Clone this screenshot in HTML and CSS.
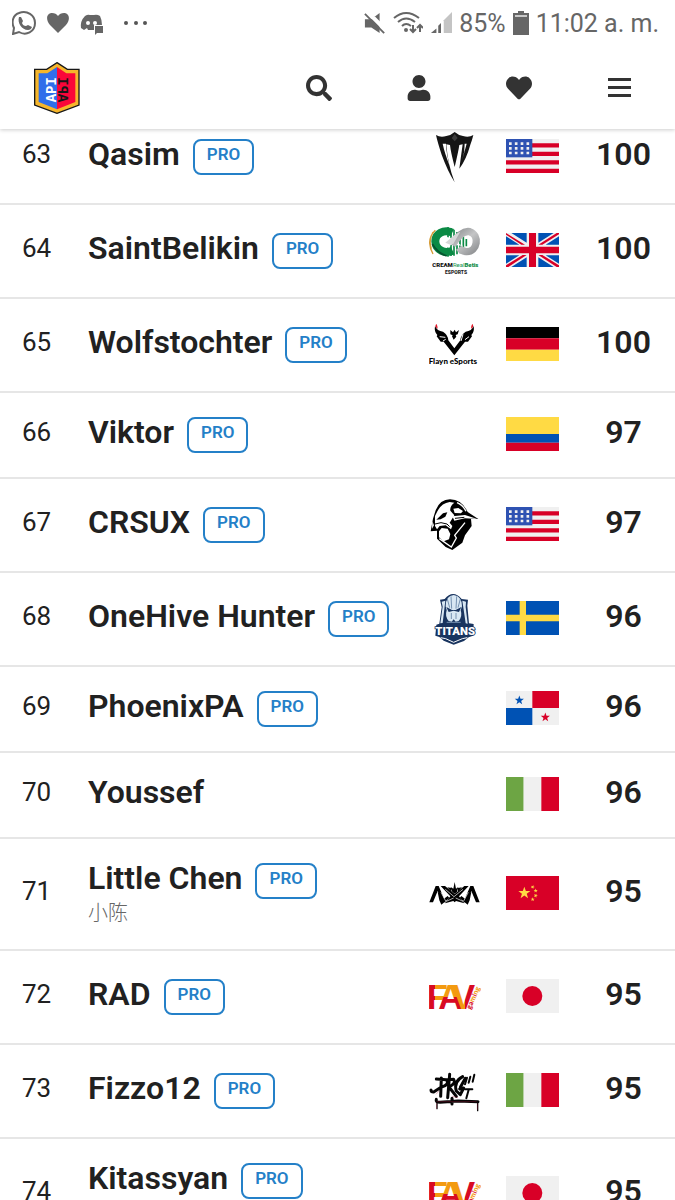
FILE: index.html
```html
<!DOCTYPE html>
<html lang="en">
<head>
    <meta charset="UTF-8">
    <meta name="viewport" content="width=device-width, initial-scale=1.0">
    <title>Player ranking</title>
    <link rel="stylesheet" href="styles.css">
</head>
<body>
    <!-- Shared flags and team logos -->
    <svg class="sprite" width="0" height="0" aria-hidden="true">
        <defs>
            <linearGradient id="favF" x1="0" x2="1" y1="0" y2="0">
                <stop offset=".4" stop-color="#d80b22"/><stop offset=".4" stop-color="#f39a10"/>
            </linearGradient>
            <linearGradient id="favA" x1="0" x2="0" y1="0" y2="1">
                <stop offset=".5" stop-color="#f39a10"/><stop offset=".5" stop-color="#d80b22"/>
            </linearGradient>
            <linearGradient id="favV" x1="0" x2="1" y1="0" y2="0">
                <stop offset=".56" stop-color="#f39a10"/><stop offset=".56" stop-color="#d80b22"/>
            </linearGradient>
            <linearGradient id="steel" x1="0" x2="1" y1="0" y2="1">
                <stop offset="0" stop-color="#8d9092"/><stop offset=".5" stop-color="#c4c5c6"/><stop offset="1" stop-color="#909294"/>
            </linearGradient>
            <path id="star" d="M0-10 2.400-3.200 9.500-3.100 3.800 1.200 5.900 8.100 0 4-5.900 8.100-3.800 1.200-9.500-3.100-2.400-3.200z"/>
        </defs>
        <symbol id="flag-us" viewBox="0 0 159 102" preserveAspectRatio="none">
            <path fill="#f0f0f0" d="M0 0h159v102H0z"/>
            <path fill="#d80027" d="M0 12.700h159v12.700H0zM0 38.200h159V51H0zM0 63.700h159v12.700H0zM0 89.200h159V102H0z"/>
            <path fill="#2e52b2" d="M0 0h79v55H0z"/>
            <path stroke="#f0f0f0" stroke-width="8" stroke-dasharray="8 9.500" d="M9 14h62M9 28h62M9 42h62"/>
        </symbol>
        <symbol id="flag-gb" viewBox="0 0 159 102" preserveAspectRatio="none">
            <path fill="#f0f0f0" d="M0 0h159v102H0z"/>
            <path fill="#0052b4" d="M16 0h46v29zM97 0h46L97 29zM0 10v25h40zM159 10v25h-40zM0 92V67h40zM159 92V67h-40zM16 102h46V73zM97 102h46L97 73z"/>
            <path fill="#d80027" d="M69 0h21v41h69v20H90v41H69V61H0V41h69z"/>
            <path fill="#d80027" d="M0 0v5l46 30h11zM159 0h-7L97 35h12l50-31zM0 102v-5l50-31h12L7 102zM159 102v-5l-50-31H97l55 36z"/>
        </symbol>
        <symbol id="flag-de" viewBox="0 0 159 102" preserveAspectRatio="none">
            <path d="M0 0h159v34H0z"/><path fill="#d80027" d="M0 34h159v34H0z"/><path fill="#ffda44" d="M0 68h159v34H0z"/>
        </symbol>
        <symbol id="flag-co" viewBox="0 0 159 102" preserveAspectRatio="none">
            <path fill="#ffda44" d="M0 0h159v51H0z"/><path fill="#0052b4" d="M0 51h159v26H0z"/><path fill="#d80027" d="M0 77h159v25H0z"/>
        </symbol>
        <symbol id="flag-se" viewBox="0 0 159 102" preserveAspectRatio="none">
            <path fill="#0052b4" d="M0 0h159v102H0z"/><path fill="#ffda44" d="M41 0h19v41h99v20H60v41H41V61H0V41h41z"/>
        </symbol>
        <symbol id="flag-pa" viewBox="0 0 159 102" preserveAspectRatio="none">
            <path fill="#f0f0f0" d="M0 0h159v102H0z"/><path fill="#d80027" d="M79 0h80v51H79z"/><path fill="#0052b4" d="M0 51h79v51H0z"/>
            <use href="#star" transform="translate(40 28) scale(1.450)" fill="#0052b4"/>
            <use href="#star" transform="translate(118 79) scale(1.450)" fill="#d80027"/>
        </symbol>
        <symbol id="flag-it" viewBox="0 0 159 102" preserveAspectRatio="none">
            <path fill="#6da544" d="M0 0h53v102H0z"/><path fill="#f0f0f0" d="M53 0h53v102H53z"/><path fill="#d80027" d="M106 0h53v102h-53z"/>
        </symbol>
        <symbol id="flag-cn" viewBox="0 0 159 102" preserveAspectRatio="none">
            <path fill="#d80027" d="M0 0h159v102H0z"/>
            <g fill="#ffda44">
                <use href="#star" transform="translate(55 51) scale(1.900)"/>
                <use href="#star" transform="translate(80 33) rotate(20) scale(.650)"/>
                <use href="#star" transform="translate(89 44) scale(.650)"/>
                <use href="#star" transform="translate(89 59) rotate(20) scale(.650)"/>
                <use href="#star" transform="translate(80 70) scale(.650)"/>
            </g>
        </symbol>
        <symbol id="flag-jp" viewBox="0 0 159 102" preserveAspectRatio="none">
            <path fill="#f0f0f0" d="M0 0h159v102H0z"/><circle cx="79" cy="51" r="30" fill="#d80027"/>
        </symbol>

        <symbol id="team-fang" viewBox="42 17 156 156">
            <path fill="#141414" d="M63 29q13 8 31 3 15-3 25-12 10 9 25 12 18 5 31-3-4 17-9 29-12 44-33 72 5-38 10-73l-10 2q-3 20-14 66-12-46-14-66l-11-2q4 60 25 114-22-36-39-83-12-36-17-59z"/>
            <path fill="#fff" d="M83 55q6 29 21 66-10-36-11-66zM155 55q-6 23-14 50 9-24 8-50z"/>
            <path fill="#3a3a3a" d="m119 26 9 12-9 10-9-10z"/>
        </symbol>
        <symbol id="team-cream" viewBox="42 299 156 156">
            <path fill="none" stroke="#d69b35" stroke-width="4" d="M61 315q-30 30-7 71M54 320q-14 25-5 50"/>
            <path fill="none" stroke="#0b8a45" stroke-width="24" d="M112 322c-26-12-52 4-51 27 1 25 29 38 52 27"/>
            <path fill="none" stroke="#07532f" stroke-width="5" d="M52 356q15 27 43 36"/>
            <path stroke="#0b8a45" stroke-width="5" d="M99 305v89M108 308v84M117 313v78M126 320v67M135 330v54M145 335v40M154 341v22"/>
            <path fill="#fff" d="M79 346q9-19 35-5 13 16 31 20l-19-1q-17-9-25 7-19-3-22-21z"/>
            <path fill="none" stroke="url(#steel)" stroke-width="22" d="M112 359q27-45 52-40c31 10 24 61-10 60q-14-1-22-12" />
            <path fill="#d6d7d8" d="m91 352 28-24 17-9-20 35-8 5z"/>
            <text x="52" y="425" font-family="Roboto, sans-serif" font-weight="900" font-size="18" fill="#111">CREAM<tspan font-weight="400" fill="#159650">Real</tspan><tspan fill="#0b8a45">Betis</tspan></text>
            <text x="90" y="446" font-family="Roboto, sans-serif" font-weight="900" font-size="15" fill="#222">ESPORTS</text>
        </symbol>
        <symbol id="team-flayn" viewBox="42 56 156 156">
            <path d="M60 77q6 15 24 17 15 9 16 26l18 24 18-24q1-17 16-26 18-2 24-17 3 18-7 27l2 4-12 16h-9l-32 41-32-41h-9l-12-16 2-4q-10-9-7-27z"/>
            <path fill="none" stroke="#fff" stroke-width="3" d="m74 109 17 2M84 122l8-5M162 109l-12 9M144 102l-6 20"/>
            <path d="m106 89 8 7 5-8 4 8 9-7-4 13-6 2 2 5-8 9-5-10 2-3-7-3z"/>
            <path fill="#e21b2d" d="M64 70q5 8 4 15-11-5-4-15zm108 0q-5 8-4 15 11-5 4-15z"/>
            <text x="41" y="191" font-family="Lato, sans-serif" font-weight="900" font-size="24">Flayn eSports</text>
        </symbol>
        <symbol id="team-titan-head" viewBox="42 41 156 156">
            <path d="M62 75q13-33 43-33 35 0 53 38l32 21h-22l2 21-20 28-8 22-30 22-20-9-26-25v-24l-19 2 7-38z"/>
            <path fill="#fff" d="M66 80q12-26 38-30l14 2q-14 10-12 24l12 14-14 22 8 10-4 10-16-12-18 2-8 10-6-10V92z"/>
            <path d="m64 103 20-19 13-3-6 13-14 8z"/>
            <path fill="#fff" d="m72 138 8-10 18 2 8 16-4 16-16 6-14-12zM112 93l38-4 37 12-37-2-32 7zM115 70l15-2 14 9-6 7-19-1zM52 108l5 12-6 10z"/>
            <path fill="none" stroke="#fff" stroke-width="4" d="m150 112-31 38 5 8-15 27-36-25M126 52q18 7 27 26"/>
            <path fill="none" stroke="#000" stroke-width="3" d="M60 116l18-4 18 4 8 8M120 99l28-3"/>
        </symbol>
        <symbol id="team-titans" viewBox="42 322 156 156">
            <path fill="#19345f" d="m75 342 14-2q25-30 51 0l19 2-2 18 5 53 14 2-2 35-13 5-14 11-31 11-30-12-13-11-12-4 3-33 9-3 7-49z"/>
            <path fill="#d8e7f3" d="m80 348 11-3-8 67-7 1 7-50zM153 348l-11-3 10 68 6 1-6-50zM92 362q0-32 24-34 24 2 25 34l-4 12q6 18-6 32l-9 2-6-7-6 7-9-2q-12-14-6-32z"/>
            <path fill="#19345f" d="m94 364 17 9h11l17-9-7 15-16-4-15 4z"/>
            <path fill="none" stroke="#7692b1" stroke-width="3" d="m108 332 2 37M125 332l-2 37M97 340l7 26M136 340l-7 26M95 410h42M109 382v18M123 382v18"/>
            <path fill="none" stroke="#fff" stroke-width="3" d="m77 456 15 3 24 11 26-11 15-3"/>
            <text x="61" y="447" font-family="Roboto, sans-serif" font-weight="900" font-size="34" fill="#fff" stroke="#19345f" stroke-width="5" paint-order="stroke">TITANS</text>
        </symbol>
        <symbol id="team-nova" viewBox="42 26 156 156">
            <path d="M43 129 62 80h9l21 49H82L68 95l-14 34zM194 129 175 80h-9l-21 49h10l14-34 14 34z"/>
            <path d="M77 80h13l29 24 29-24h13l-29 31 16 21-25-7-4 4-4-4-25 7 16-21z"/>
            <path d="m68 98 8 3 9 19 13-10 5 6-24 20-6-13zM169 98l-8 3-9 19-13-10-5 6 24 20 6-13z"/>
            <path d="m97 84 12 2v12zM141 84l-12 2v12zM119 68l4 20 7-5-4 15-7 5-7-5-5-15 8 5z"/>
            <path stroke="#fff" stroke-width="2" fill="none" d="m91 90 26 22 27-22M94 126l22-10M144 126l-22-10M78 99l14 26M160 99l-14 26"/>
        </symbol>
        <symbol id="team-fav" viewBox="42 333 156 156">
            <g font-family="'Liberation Sans Narrow', 'Liberation Sans', sans-serif" font-weight="700" font-size="104">
                <text x="35" y="448" fill="url(#favF)">F</text>
                <text x="70" y="448" fill="url(#favA)">A</text>
                <text x="111" y="448" fill="url(#favV)">V</text>
            </g>
            <text transform="translate(167 449) rotate(-66)" font-family="Lato, sans-serif" font-weight="900" font-size="22" fill="#d80b22">ga<tspan fill="#f39a10">m</tspan>i<tspan fill="#f39a10">ng</tspan></text>
        </symbol>
        <symbol id="team-graffiti" viewBox="42 44 156 156">
            <g fill="none" stroke="#050505" stroke-linecap="round" stroke-linejoin="round">
                <path stroke-width="9" d="m79 83-2 55M64 86l30 2q12 14-16 23l-22 14q-8 0-8-6M104 72l-6 70M96 88l20-1q8 12-14 23l22 28M143 79q-28 15-19 43l12 11 10-20-12 3M151 84l-15 27M64 147q-3 9 11 9l54-4 60 2M111 144v17"/>
                <path stroke-width="6" d="m156 82-6 20M166 79l-5 18M178 73l-5 21M150 117h22M161 118l-7 26"/>
                <path stroke-width="4" d="M66 157v18M188 157v24"/>
                <path stroke="#b01840" stroke-width="1" d="M66 154h118M64 131l7-8M112 138l16 4M65 160v14M187 160v17"/>
            </g>
        </symbol>
    </svg>

    <header class="header">
        <div class="status-bar">
            <div class="status-group">
                <svg class="status-icon" viewBox="0 0 24 24" aria-hidden="true"><path fill="none" stroke="#666" stroke-width="2" d="m1 23 1-6C-1 11 1 4 7 2c8-3 16 2 16 10 0 9-9 13-16 9z"/><path fill="#666" d="M7 6h2l2 4-1 2q1 3 4 3l2-1 4 2q-1 3-4 3C10 19 5 12 7 6z"/></svg>
                <svg class="status-icon" viewBox="0 0 24 24" aria-hidden="true"><path fill="#666" d="M12 22 4 14C-1 8 1 2 6 2q4 0 6 3 2-3 6-3c5 0 7 6 2 12z"/></svg>
                <svg class="status-icon" viewBox="0 0 24 24" aria-hidden="true"><path fill="#666" fill-rule="evenodd" d="M5 5q3-2 5-1h4q3-1 6 1 2 4 2 9h-8v5H8l-1-2-3 2-3-2Q0 10 5 5zm3 5a2 2 0 1 0 0 4 2 2 0 0 0 0-4zm7 0a2 2 0 1 0 0 4 2 2 0 0 0 0-4zM15 15h8v7h-6l-2 2z"/></svg>
                <svg class="status-dots" viewBox="0 0 24 24" aria-hidden="true"><g fill="#555"><circle cx="2" cy="12" r="2"/><circle cx="12" cy="12" r="2"/><circle cx="21" cy="12" r="2"/></g></svg>
            </div>
            <div class="status-group status-right">
                <svg class="signal-icon" viewBox="0 0 24 24" aria-hidden="true"><path fill="#666" d="M1 8h7l9-7v22l-9-6H1z"/><path fill="#fff" d="m10 6 8 8v-3l-6-6z"/><path stroke="#fff" stroke-width="3" d="m4 1 20 20"/><path stroke="#666" stroke-width="2" d="m1 2 21 21"/></svg>
                <svg class="wifi-icon" viewBox="0 0 30 24" aria-hidden="true"><g fill="none" stroke="#666" stroke-width="2"><path d="M1 7q12-10 25 0M5 11q8-7 17 0M9 15q4-4 9 0"/><path d="M20 14v7m-3-3 3 3 3-3M27 21v-7m-3 3 3-3 3 3"/></g><circle cx="13" cy="19" r="2" fill="#666"/></svg>
                <svg class="signal-icon" viewBox="0 0 24 24" aria-hidden="true"><path fill="#c4c4c4" d="M15 9 24 0v23h-9z"/><path fill="#666" d="m1 23 6-5v5zM9 15l3-3v11H9z"/></svg>
                <span>85%</span>
                <svg class="battery-icon" viewBox="0 0 16 24" aria-hidden="true"><path fill="#666" d="M5 0h6v2h5v22H0V2h5z"/><path fill="#c9c9c9" d="M2 4h12v2H2z"/></svg>
                <span>11:02 a. m.</span>
            </div>
        </div>
        <nav class="navbar">
            <a class="brand" href="#" aria-label="Home">
                <svg viewBox="26 21 138 156" aria-hidden="true">
                    <path fill="#f6b62b" stroke="#171717" stroke-width="4" d="m95 23 31 20h35v107l-66 25-67-25V43h36z"/>
                    <path fill="#2f6eea" d="M95 36 66 55H40v86l55 22z"/>
                    <path fill="#fa0639" d="m95 36 28 19h27v86l-55 22z"/>
                    <g font-family="'Liberation Mono', monospace" font-weight="700" font-size="42">
                        <text transform="translate(93 142) rotate(-90)" fill="#fff">API</text>
                        <text transform="translate(97 142) scale(-1 1) rotate(-90)" fill="#171717">API</text>
                    </g>
                </svg>
            </a>
            <div class="nav-actions">
                <button type="button" class="nav-button" aria-label="Search">
                    <svg viewBox="0 0 512 512"><path d="M505 442.700L405.300 343c-4.500-4.500-10.600-7-17-7H372c27.600-35.300 44-79.700 44-128C416 93.100 322.900 0 208 0S0 93.100 0 208s93.100 208 208 208c48.300 0 92.700-16.400 128-44v16.300c0 6.400 2.500 12.500 7 17l99.700 99.700c9.400 9.400 24.600 9.400 33.900 0l28.300-28.300c9.400-9.400 9.400-24.600.1-34zM208 336c-70.700 0-128-57.200-128-128 0-70.700 57.200-128 128-128 70.700 0 128 57.200 128 128 0 70.700-57.200 128-128 128z"/></svg>
                </button>
                <button type="button" class="nav-button" aria-label="Profile">
                    <svg viewBox="-32 0 512 512"><path d="M224 256c70.700 0 128-57.300 128-128S294.700 0 224 0 96 57.300 96 128s57.300 128 128 128zm89.600 32h-16.700c-22.200 10.200-46.900 16-72.900 16s-50.600-5.800-72.900-16h-16.700C60.200 288 0 348.200 0 422.400V464c0 26.500 21.500 48 48 48h352c26.500 0 48-21.500 48-48v-41.600c0-74.200-60.200-134.400-134.400-134.400z"/></svg>
                </button>
                <button type="button" class="nav-button" aria-label="Favorites">
                    <svg viewBox="0 0 512 512"><path d="M462.300 62.600C407.500 15.900 326 24.300 275.700 76.200L256 96.500l-19.700-20.300C186.100 24.300 104.500 15.900 49.700 62.600c-62.800 53.600-66.100 149.800-9.900 207.900l193.500 199.800c12.500 12.900 32.800 12.900 45.300 0l193.500-199.800c56.300-58.100 53-154.300-9.800-207.900z"/></svg>
                </button>
                <button type="button" class="nav-button" aria-label="Menu">
                    <svg viewBox="0 0 26 26"><path d="M2 3h23v3H2zM2 11h23v3H2zM2 19h23v3H2z"/></svg>
                </button>
            </div>
        </nav>
    </header>

    <main class="ranking">
        <table class="ranking-table">
            <tbody>
                <tr>
                    <td class="rank">63</td>
                    <td class="player"><div class="player-line">Qasim <span class="badge">PRO</span></div></td>
                    <td class="team"><svg><use href="#team-fang"/></svg></td>
                    <td class="country"><svg><use href="#flag-us"/></svg></td>
                    <td class="points">100</td>
                </tr>
                <tr>
                    <td class="rank">64</td>
                    <td class="player"><div class="player-line">SaintBelikin <span class="badge">PRO</span></div></td>
                    <td class="team"><svg><use href="#team-cream"/></svg></td>
                    <td class="country"><svg><use href="#flag-gb"/></svg></td>
                    <td class="points">100</td>
                </tr>
                <tr>
                    <td class="rank">65</td>
                    <td class="player"><div class="player-line">Wolfstochter <span class="badge">PRO</span></div></td>
                    <td class="team"><svg><use href="#team-flayn"/></svg></td>
                    <td class="country"><svg><use href="#flag-de"/></svg></td>
                    <td class="points">100</td>
                </tr>
                <tr>
                    <td class="rank">66</td>
                    <td class="player"><div class="player-line">Viktor <span class="badge">PRO</span></div></td>
                    <td class="team"></td>
                    <td class="country"><svg><use href="#flag-co"/></svg></td>
                    <td class="points">97</td>
                </tr>
                <tr>
                    <td class="rank">67</td>
                    <td class="player"><div class="player-line">CRSUX <span class="badge">PRO</span></div></td>
                    <td class="team"><svg><use href="#team-titan-head"/></svg></td>
                    <td class="country"><svg><use href="#flag-us"/></svg></td>
                    <td class="points">97</td>
                </tr>
                <tr>
                    <td class="rank">68</td>
                    <td class="player"><div class="player-line">OneHive Hunter <span class="badge">PRO</span></div></td>
                    <td class="team"><svg><use href="#team-titans"/></svg></td>
                    <td class="country"><svg><use href="#flag-se"/></svg></td>
                    <td class="points">96</td>
                </tr>
                <tr>
                    <td class="rank">69</td>
                    <td class="player"><div class="player-line">PhoenixPA <span class="badge">PRO</span></div></td>
                    <td class="team"></td>
                    <td class="country"><svg><use href="#flag-pa"/></svg></td>
                    <td class="points">96</td>
                </tr>
                <tr>
                    <td class="rank">70</td>
                    <td class="player"><div class="player-line">Youssef</div></td>
                    <td class="team"></td>
                    <td class="country"><svg><use href="#flag-it"/></svg></td>
                    <td class="points">96</td>
                </tr>
                <tr>
                    <td class="rank">71</td>
                    <td class="player">
                        <div class="player-line">Little Chen <span class="badge">PRO</span></div>
                        <div class="player-alias" lang="zh">小陈</div>
                    </td>
                    <td class="team"><svg><use href="#team-nova"/></svg></td>
                    <td class="country"><svg><use href="#flag-cn"/></svg></td>
                    <td class="points">95</td>
                </tr>
                <tr>
                    <td class="rank">72</td>
                    <td class="player"><div class="player-line">RAD <span class="badge">PRO</span></div></td>
                    <td class="team"><svg><use href="#team-fav"/></svg></td>
                    <td class="country"><svg><use href="#flag-jp"/></svg></td>
                    <td class="points">95</td>
                </tr>
                <tr>
                    <td class="rank">73</td>
                    <td class="player"><div class="player-line">Fizzo12 <span class="badge">PRO</span></div></td>
                    <td class="team"><svg><use href="#team-graffiti"/></svg></td>
                    <td class="country"><svg><use href="#flag-it"/></svg></td>
                    <td class="points">95</td>
                </tr>
                <tr>
                    <td class="rank">74</td>
                    <td class="player">
                        <div class="player-line">Kitassyan <span class="badge">PRO</span></div>
                        <div class="player-alias"></div>
                    </td>
                    <td class="team"><svg><use href="#team-fav"/></svg></td>
                    <td class="country"><svg><use href="#flag-jp"/></svg></td>
                    <td class="points">95</td>
                </tr>
            </tbody>
        </table>
    </main>
</body>
</html>
```
FILE: styles.css
```css
* {
    box-sizing: border-box;
}
body {
    display: flex;
    flex-direction: column;
    height: 100vh;
    margin: 0;
    overflow: hidden;
    background-color: #fff;
    color: #212121;
    font-family: Roboto, "Noto Sans CJK SC", sans-serif;
}
svg {
    display: block;
}
.sprite {
    position: absolute;
}

/* Header */
.header {
    position: relative;
    z-index: 1;
    flex: none;
    background-color: #fff;
    box-shadow: 0 1px 4px rgba(0, 0, 0, 0.2);
}
.status-bar {
    display: flex;
    justify-content: space-between;
    align-items: center;
    height: 46px;
    padding: 0 16px 0 12px;
    color: #666;
    font-size: 25px;
}
.status-group {
    display: flex;
    align-items: center;
    gap: 10px;
}
.status-right {
    gap: 7px;
}
.status-icon {
    width: 24px;
    height: 24px;
}
.status-dots {
    width: 24px;
    height: 24px;
    margin-left: 10px;
}
.signal-icon {
    width: 22px;
    height: 24px;
}
.wifi-icon {
    width: 30px;
    height: 24px;
}
.battery-icon {
    width: 16px;
    height: 24px;
}
.navbar {
    display: flex;
    justify-content: space-between;
    align-items: center;
    height: 83px;
    padding: 0 6px 0 34px;
}
.brand svg {
    width: 46px;
    height: 52px;
}
.nav-actions {
    display: flex;
}
.nav-button {
    display: flex;
    justify-content: center;
    width: 100px;
    padding: 16px 0;
    border: none;
    background: none;
    cursor: pointer;
}
.nav-button svg {
    width: 26px;
    height: 26px;
    fill: #333;
}

/* Ranking, scrolled partly under the header */
.ranking {
    flex: 1;
    min-height: 0;
    margin-top: -18px;
    overflow: hidden;
}
.ranking-table {
    width: 100%;
    border-collapse: separate;
    border-spacing: 0;
}
.ranking-table td {
    padding: 18px 0 24px;
    border-bottom: 2px solid #e6e6e6;
    line-height: 42px;
    vertical-align: middle;
}
.ranking-table .rank {
    width: 73px;
    font-size: 26px;
    text-align: center;
}
.ranking-table .player {
    padding-left: 15px;
}
.player-line {
    display: flex;
    align-items: center;
    gap: 13px;
    font-size: 32px;
    font-weight: 600;
    white-space: nowrap;
}
.badge {
    height: 36px;
    margin-top: 6px;
    padding: 3px 12px 9px;
    border: 2px solid #2480c8;
    border-radius: 8px;
    color: #2480c8;
    font-size: 17px;
    line-height: 20px;
}
.player-alias {
    height: 26px;
    padding-top: 2px;
    color: #666;
    font-size: 20px;
    font-weight: 300;
    line-height: 24px;
}
.ranking-table .team {
    width: 77px;
    padding: 20px 0;
}
.team svg {
    width: 52px;
    height: 52px;
    margin: 0 auto;
}
.ranking-table .country {
    width: 79px;
    padding: 0 0 2px;
}
.country svg {
    width: 53px;
    height: 34px;
    margin: 0 auto;
}
.ranking-table .points {
    width: 103px;
    font-size: 32px;
    font-weight: 600;
    text-align: center;
}
```
